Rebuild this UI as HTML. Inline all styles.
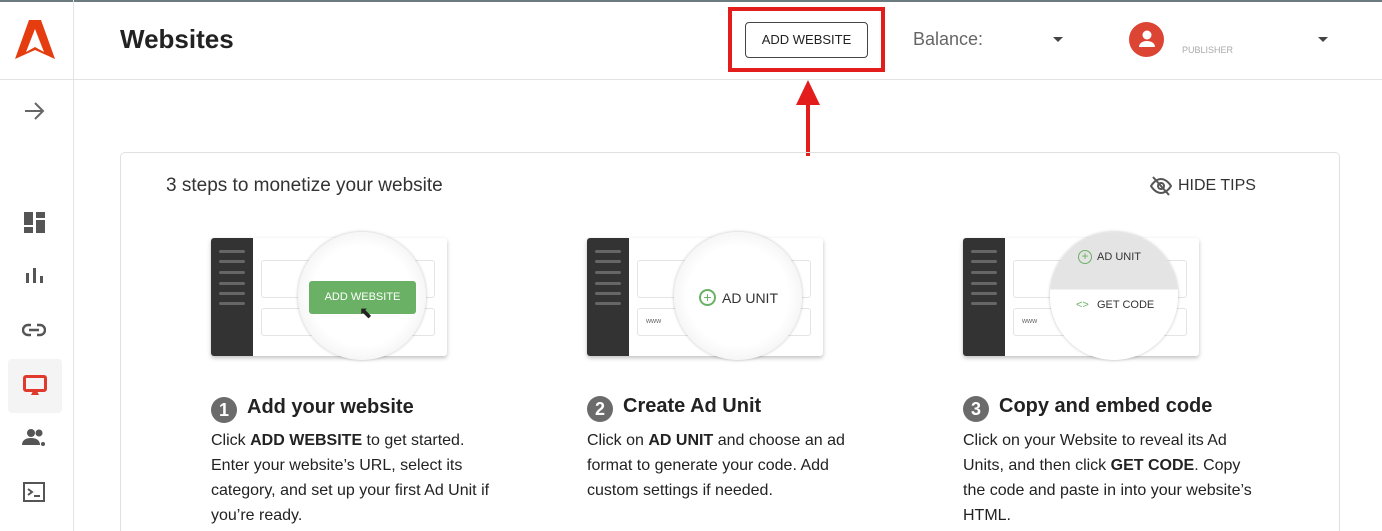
<!DOCTYPE html>
<html><head><meta charset="utf-8"><style>
*{margin:0;padding:0;box-sizing:border-box}
html,body{width:1382px;height:531px;overflow:hidden}
body{background:#fff;font-family:"Liberation Sans",Arial,sans-serif;color:#222;position:relative}
.a{position:absolute}
.side{left:0;top:0;width:74px;height:531px;border-right:1px solid #e3e3e3}
.hdr{left:0;top:79px;width:1382px;height:1px;background:#e3e3e3}
.card{left:120px;top:152px;width:1220px;height:379px;border:1px solid #e0e0e0;border-bottom:none;border-radius:5px 5px 0 0}
.ill{width:236px;height:118px;background:#fff;border-radius:3px;box-shadow:0 2px 4px rgba(0,0,0,.25)}
.ill .sb{left:0;top:0;width:42px;height:118px;background:#333;border-radius:3px 0 0 3px}
.ill .ln{left:8px;width:26px;height:3px;background:#666;border-radius:2px}
.ill .bx{left:50px;width:174px;border:1px solid #e4e4e4;border-radius:3px}
.circ{width:128px;height:128px;border-radius:50%;background:radial-gradient(circle,#fff 55%,#eee 85%,#ddd 100%);box-shadow:0 0 3px rgba(0,0,0,.25)}
.h{font-size:20px;font-weight:bold;color:#222}
.num{display:inline-block;width:26px;height:26px;border-radius:50%;background:#6b6b6b;color:#fff;font-size:18px;text-align:center;line-height:26px;margin-right:10px;vertical-align:-3px}
.p{font-size:16px;line-height:25px;color:#222;width:290px}
</style></head><body>
<div class="a" style="left:0;top:0;width:1382px;height:2px;background:#6b7b80"></div>
<div class="a side"></div>
<div class="a hdr"></div>
<svg class="a" style="left:15px;top:19px" width="40" height="41" viewBox="0 0 40 41"><path d="M14 1h12l14 39-20-9-20 9zM20 10l-9 23 9-5 9 5z" fill="#e63d10" fill-rule="evenodd"/></svg>
<svg class="a" style="left:24px;top:101px" width="22" height="20" viewBox="0 0 22 20"><path d="M1 10h18M11 2l8 8-8 8" stroke="#666" stroke-width="2" fill="none"/></svg>
<svg class="a" style="left:24px;top:212px" width="22" height="22" viewBox="0 0 22 22" fill="#555"><rect x="0" y="0" width="9" height="13"/><rect x="12" y="0" width="9" height="6"/><rect x="0" y="15" width="9" height="6"/><rect x="12" y="8" width="9" height="13"/></svg>
<svg class="a" style="left:26px;top:266px" width="18" height="18" fill="#555"><rect x="0" y="7" width="3" height="10"/><rect x="7" y="2" width="3" height="15"/><rect x="14" y="10" width="3" height="7"/></svg>
<svg class="a" style="left:22px;top:322px" width="24" height="16" viewBox="0 0 24 16"><path d="M9 3H6a5 5 0 000 10h3M15 3h3a5 5 0 010 10h-3M7 8h10" stroke="#555" stroke-width="2.4" fill="none"/></svg>
<div class="a" style="left:8px;top:359px;width:54px;height:54px;background:#f4f4f4;border-radius:4px"></div>
<svg class="a" style="left:23px;top:375px" width="24" height="22" viewBox="0 0 24 22"><rect x="1.5" y="1.5" width="21" height="14" rx="1.5" stroke="#e03a2c" stroke-width="3" fill="none"/><path d="M8 20h8l-2-4h-4z" fill="#e03a2c"/></svg>
<svg class="a" style="left:22px;top:428px" width="24" height="20" viewBox="0 0 24 20" fill="#555"><circle cx="9" cy="5" r="4"/><path d="M0 17c0-5 4-7 9-7s9 2 9 7z"/><circle cx="17" cy="5" r="3.5"/><circle cx="21" cy="16" r="2"/></svg>
<svg class="a" style="left:23px;top:482px" width="22" height="20" viewBox="0 0 22 20"><rect x="1" y="1" width="20" height="18" stroke="#555" stroke-width="2" fill="none"/><path d="M5 7l4 3-4 3M11 14h6" stroke="#555" stroke-width="2" fill="none"/></svg>

<div class="a" style="left:120px;top:24px;font-size:26px;font-weight:bold;color:#222">Websites</div>
<div class="a" style="left:728px;top:7px;width:157px;height:65px;border:4px solid #e31c1c"></div>
<div class="a" style="left:745px;top:22px;width:123px;height:36px;border:1px solid #444;border-radius:4px;font-size:13px;text-align:center;line-height:34px;color:#222">ADD WEBSITE</div>
<div class="a" style="left:796px;top:80px;width:0;height:0;border-left:12px solid transparent;border-right:12px solid transparent;border-bottom:25px solid #e31c1c"></div>
<div class="a" style="left:806px;top:104px;width:4px;height:52px;background:#e31c1c"></div>
<div class="a" style="left:913px;top:29px;font-size:18px;color:#666">Balance:</div>
<div class="a" style="left:1053px;top:37px;border-left:5px solid transparent;border-right:5px solid transparent;border-top:5px solid #444"></div>
<div class="a" style="left:1129px;top:22px;width:35px;height:35px;border-radius:50%;background:#dc4433"></div>
<svg class="a" style="left:1137px;top:29px" width="20" height="20" viewBox="0 0 20 20" fill="#fff"><circle cx="10" cy="6" r="4.5"/><path d="M2 18c0-4 4-6 8-6s8 2 8 6z"/></svg>
<div class="a" style="left:1182px;top:45px;font-size:9px;color:#aaa">PUBLISHER</div>
<div class="a" style="left:1318px;top:37px;border-left:5px solid transparent;border-right:5px solid transparent;border-top:5px solid #444"></div>

<div class="a card"></div>
<div class="a" style="left:166px;top:175px;font-size:19px;color:#333">3 steps to monetize your website</div>
<svg class="a" style="left:1150px;top:176px" width="22" height="20" viewBox="0 0 22 20"><path d="M1 10s4-7 10-7 10 7 10 7-4 7-10 7S1 10 1 10z" stroke="#555" stroke-width="2" fill="none"/><circle cx="11" cy="10" r="3" stroke="#555" stroke-width="2" fill="none"/><path d="M3 1l16 18" stroke="#555" stroke-width="2"/></svg>
<div class="a" style="left:1178px;top:177px;font-size:16px;color:#333">HIDE TIPS</div>

<div class="a ill" style="left:211px;top:238px"><div class="a sb"></div>
<div class="a ln" style="top:12px"></div><div class="a ln" style="top:22px"></div><div class="a ln" style="top:33px"></div><div class="a ln" style="top:44px"></div><div class="a ln" style="top:54px"></div><div class="a ln" style="top:64px"></div>
<div class="a bx" style="top:22px;height:38px"></div><div class="a bx" style="top:70px;height:28px"></div></div>
<div class="a circ" style="left:298px;top:232px"></div>
<div class="a" style="left:309px;top:281px;width:107px;height:33px;background:#6ab165;border-radius:3px;color:#fff;font-size:11px;text-align:center;line-height:33px">ADD WEBSITE</div>
<div class="a" style="left:359px;top:303px;font-size:16px">&#x2B09;</div>

<div class="a ill" style="left:587px;top:238px"><div class="a sb"></div>
<div class="a ln" style="top:12px"></div><div class="a ln" style="top:22px"></div><div class="a ln" style="top:33px"></div><div class="a ln" style="top:44px"></div><div class="a ln" style="top:54px"></div><div class="a ln" style="top:64px"></div>
<div class="a bx" style="top:22px;height:38px"></div><div class="a bx" style="top:70px;height:28px"><span style="font-size:7px;color:#666;position:absolute;left:8px;top:9px">www</span></div></div>
<div class="a circ" style="left:674px;top:232px"></div>
<div class="a" style="left:699px;top:289px;width:17px;height:17px;border:2px solid #6ab165;border-radius:50%;color:#6ab165;font-size:14px;line-height:12px;text-align:center">+</div>
<div class="a" style="left:722px;top:290px;font-size:14px;color:#333">AD UNIT</div>

<div class="a ill" style="left:963px;top:238px"><div class="a sb"></div>
<div class="a ln" style="top:12px"></div><div class="a ln" style="top:22px"></div><div class="a ln" style="top:33px"></div><div class="a ln" style="top:44px"></div><div class="a ln" style="top:54px"></div><div class="a ln" style="top:64px"></div>
<div class="a bx" style="top:22px;height:38px"></div><div class="a bx" style="top:70px;height:28px"><span style="font-size:7px;color:#666;position:absolute;left:8px;top:9px">www</span></div></div>
<div class="a circ" style="left:1050px;top:232px;background:linear-gradient(#e4e4e4 0,#e4e4e4 45%,#fff 45%)"></div>
<div class="a" style="left:1078px;top:250px;width:14px;height:14px;border:1.5px solid #6ab165;border-radius:50%;color:#6ab165;font-size:12px;line-height:10px;text-align:center">+</div>
<div class="a" style="left:1097px;top:251px;font-size:11px;color:#333">AD UNIT</div>
<div class="a" style="left:1076px;top:299px;font-size:11px;color:#6ab165">&lt;&gt;</div>
<div class="a" style="left:1097px;top:299px;font-size:11px;color:#333">GET CODE</div>

<div class="a h" style="left:211px;top:396px"><span class="num">1</span>Add your website</div>
<div class="a p" style="left:211px;top:428px">Click <b>ADD WEBSITE</b> to get started. Enter your website’s URL, select its category, and set up your first Ad Unit if you’re ready.</div>
<div class="a h" style="left:587px;top:395px"><span class="num">2</span>Create Ad Unit</div>
<div class="a p" style="left:587px;top:428px">Click on <b>AD UNIT</b> and choose an ad format to generate your code. Add custom settings if needed.</div>
<div class="a h" style="left:963px;top:395px"><span class="num">3</span>Copy and embed code</div>
<div class="a p" style="left:963px;top:428px">Click on your Website to reveal its Ad Units, and then click <b>GET CODE</b>. Copy the code and paste in into your website’s HTML.</div>
</body></html>
